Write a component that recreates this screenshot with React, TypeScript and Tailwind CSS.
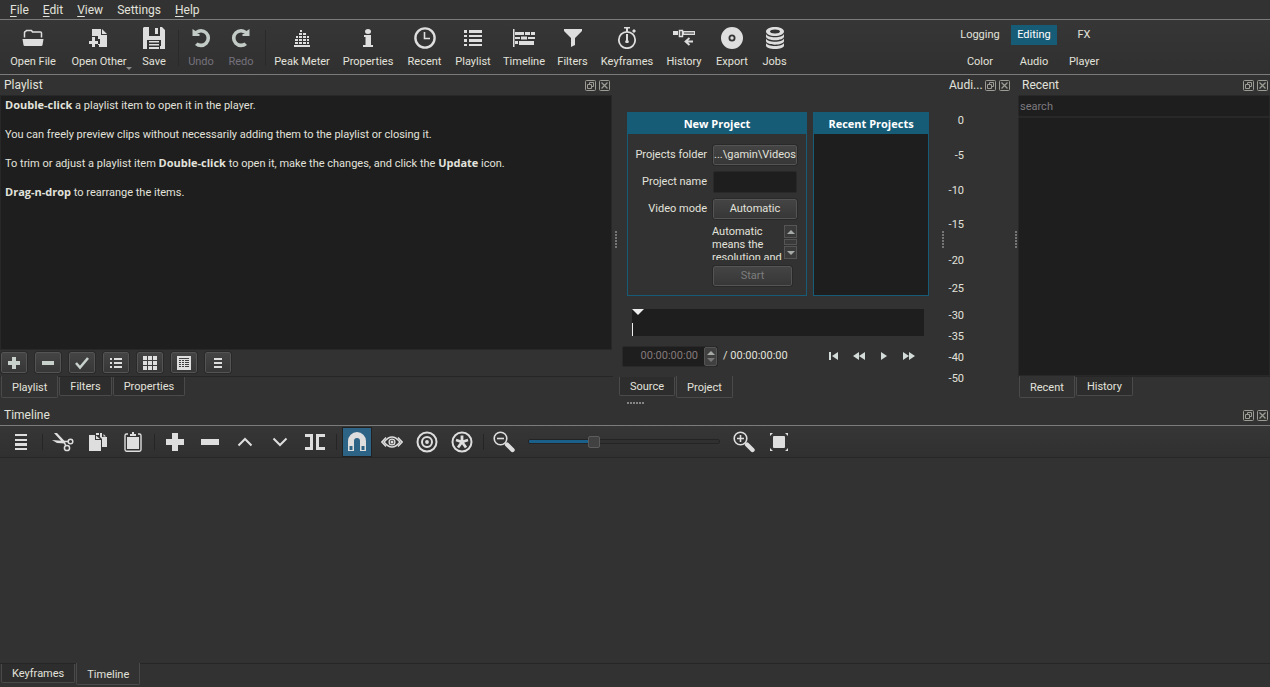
import React, { useState } from 'react';
import clsx from 'clsx';

/* ---------- main toolbar icons ---------- */

const Svg: React.FC<{ size?: number; className?: string; children: React.ReactNode }> = ({
  size = 22,
  className,
  children,
}) => (
  <svg
    width={size}
    height={size}
    viewBox={`0 0 ${size} ${size}`}
    fill="currentColor"
    className={clsx('shrink-0', className || 'text-[#dedede]')}
    aria-hidden="true"
  >
    {children}
  </svg>
);

const OpenFileIcon = () => (
  <Svg>
    <path d="M2.500 10.500V5.500q0-1 1-1l1-1h5l1 1.500h8q1 0 1 1v4.500" fill="none" stroke="currentColor" strokeWidth="1.500" />
    <path d="M.5 12h21l-1 6q-.2 1-1.200 1H2.700q-1 0-1.200-1z" />
  </Svg>
);

const OpenOtherIcon = () => (
  <Svg>
    <path d="M4 2h9v6h6v12h-8v-2h-1v-1h2v-5h-2V9H4zM14 2l5 5h-5z" />
    <path d="M4 10h3v4h3v3H7v3H4v-3H1v-3h3z" />
  </Svg>
);

const SaveIcon = () => (
  <Svg>
    <path d="M1 0h3v9h13V0h2l3 3v19h-4v-9H4v9H0V1z" />
    <path d="M12 1h3v6h-3zM6 14h10v1.500H6zM6 17h10v1.500H6zM6 20h10v2H6zM17 19h2v3h-2z" />
    <path d="M4 0h2v9H4z" />
  </Svg>
);

const UndoIcon = () => (
  <Svg className="text-[#c3cbc7]">
    <path d="M2.500 2v7h7V7H7q2-1.500 4-1.500a5.500 5.500 0 0 1 0 11q-2 0-3.500-1L5 18q2.500 2.200 6 2.200A9 9 0 0 0 11 2Q8 2 5.500 4z" />
  </Svg>
);

const RedoIcon = () => (
  <Svg className="text-[#c3cbc7]">
    <path d="M19.500 2v7h-7V7H15q-2-1.500-4-1.500a5.500 5.500 0 0 0 0 11q2 0 3.500-1L17 18q-2.500 2.200-6 2.200A9 9 0 0 1 11 2q3 0 5.500 2z" />
  </Svg>
);

const PeakMeterIcon = () => (
  <Svg>
    <path d="M3 18h16v2H3zM4 15h3v2H4zM8 15h3v2H8zM12 15h3v2h-3zM16 15h2v2h-2zM4 12h3v2H4zM8 12h3v2H8zM12 12h3v2h-3zM16 12h2v2h-2zM5 9h2v2H5zM8 9h3v2H8zM12 9h3v2h-3zM16 9h2v2h-2zM8 6h3v2H8zM12 6h3v2h-3zM9 3h2v2H9z" />
  </Svg>
);

const PropertiesIcon = () => (
  <Svg>
    <ellipse cx="11" cy="4.500" rx="3" ry="2.500" />
    <path d="M7 8h7v10h2v2H6v-2h2.500v-8H7z" />
  </Svg>
);

const RecentIcon = () => (
  <Svg>
    <circle cx="11" cy="11" r="9.600" fill="none" stroke="currentColor" strokeWidth="2.400" />
    <path d="M10.500 5v6.500H16" fill="none" stroke="currentColor" strokeWidth="1.600" />
  </Svg>
);

const ListIcon = () => (
  <Svg>
    <path d="M2 3h3v3H2zM7 3h13v3H7zM2 8h3v2H2zM7 8h13v2H7zM2 12h3v3H2zM7 12h13v3H7zM2 17h3v2H2zM7 17h13v2H7z" />
  </Svg>
);

const TimelineIcon = () => (
  <Svg>
    <path d="M0 2h1.500v18H0zM2 5h9v3H2zM12 5h5v3h-5zM18 5h4v3h-4zM2 10h5v2H2zM8 9.500h6v3H8zM15 10h7v2h-7zM2 14h3v3H2zM6 14h15v4H6z" />
  </Svg>
);

const FiltersIcon = () => (
  <Svg>
    <path d="M2 2h18v2l-7 7v7l-4 2v-9L2 4z" />
  </Svg>
);

const KeyframesIcon = () => (
  <Svg>
    <circle cx="11" cy="13" r="8.200" fill="none" stroke="currentColor" strokeWidth="1.800" />
    <path d="M8 0h6v1.500h-2V5h-2V1.500H8zM10 7h2v6l1 2-1 1h-2l-1-1 1-2zM16 4l2-2 2 2-2 2z" />
  </Svg>
);

const HistoryIcon = () => (
  <Svg>
    <path d="M0 4h5v4H0zM10 4h12v4H10z" />
    <path d="M6.500 3.500h3v6h-3z" fill="none" stroke="currentColor" strokeWidth="1.500" />
    <path d="M11 6h10" stroke="#333" strokeWidth="1" />
    <path d="M20 14.500h-7M16.500 11l-4 3.500 4 3.500" fill="none" stroke="currentColor" strokeWidth="1.800" />
  </Svg>
);

const ExportIcon = () => (
  <Svg>
    <path fillRule="evenodd" d="M11 0a11 11 0 1 0 0 22 11 11 0 0 0 0-22zm0 7.500a3.500 3.500 0 1 1 0 7 3.500 3.500 0 0 1 0-7z" />
    <circle cx="11" cy="11" r="1.700" />
  </Svg>
);

const JobsIcon = () => (
  <Svg>
    <path fillRule="evenodd" d="M11 0c5 0 9 2 9 4.500S16 9 11 9 2 7 2 4.500 6 0 11 0zm0 2.500c-3 0-5 .8-5 2s2 2 5 2 5-.8 5-2-2-2-5-2z" />
    <path d="M2 7c1 2.200 4.500 3.300 9 3.300S19 9.200 20 7v2.500c0 2-4 3.800-9 3.800S2 11.500 2 9.500z" />
    <path d="M2 11.500c1 2.200 4.500 3.300 9 3.300s8-1.100 9-3.300V14c0 2-4 3.700-9 3.700S2 16 2 14z" />
    <path d="M2 16c1 2 4.500 3 9 3s8-1 9-3v2.500c0 2-4 3.500-9 3.500s-9-1.500-9-3.500z" />
  </Svg>
);

/* ---------- playlist icons ---------- */

const PlusIcon = () => (
  <Svg size={16} className="text-[#c8d1cc]">
    <path d="M6 2h4v4h4v4h-4v4H6v-4H2V6h4z" />
  </Svg>
);

const MinusIcon = () => (
  <Svg size={16} className="text-[#c8d1cc]">
    <path d="M2 6h12v4H2z" />
  </Svg>
);

const CheckIcon = () => (
  <Svg size={16} className="text-[#c8d1cc]">
    <path d="M2 8l4 4.500L14 3" fill="none" stroke="currentColor" strokeWidth="2.600" />
  </Svg>
);

const DetailIcon = () => (
  <Svg size={16}>
    <path d="M2 3h2v2H2zM6 3h8v2H6zM2 7h2v2H2zM6 7h8v2H6zM2 11h2v2H2zM6 11h8v2H6z" />
  </Svg>
);

const GridIcon = () => (
  <Svg size={16}>
    <path d="M1 1h4v4H1zM6 1h4v4H6zM11 1h4v4h-4zM1 6h4v4H1zM6 6h4v4H6zM11 6h4v4h-4zM1 11h4v4H1zM6 11h4v4H6zM11 11h4v4h-4z" />
  </Svg>
);

const SheetIcon = () => (
  <Svg size={16}>
    <path fillRule="evenodd" d="M1 1h14v14H1zM3 3v1h10V3zM3 5v1h2V5zM6 5v1h2V5zM9 5v1h4V5zM3 7v1h2V7zM6 7v1h2V7zM9 7v1h4V7zM3 9v1h2V9zM6 9v1h2V9zM9 9v1h4V9zM3 11v1h2v-1zM6 11v1h2v-1zM9 11v1h4v-1z" />
  </Svg>
);

const MenuSmallIcon = () => (
  <Svg size={16}>
    <path d="M4 3h8v2H4zM4 7h8v2H4zM4 11h8v2H4z" />
  </Svg>
);

/* ---------- timeline icons ---------- */

const BarsIcon = () => (
  <Svg>
    <path d="M5 3h12v2H5zM5 8h12v2H5zM5 12h12v3H5zM5 17h12v2H5z" />
  </Svg>
);

const CutIcon = () => (
  <Svg>
    <path d="M2 2h3l8.500 9-2 1.500zM0 9l13 1v2.500L5 12z" />
    <circle cx="18.500" cy="10.500" r="2.300" fill="none" stroke="currentColor" strokeWidth="1.500" />
    <circle cx="15" cy="17" r="2.600" fill="none" stroke="currentColor" strokeWidth="1.500" />
    <path d="M12 10.500h4M12 11l2 4" stroke="currentColor" strokeWidth="1.600" />
  </Svg>
);

const CopyIcon = () => (
  <Svg>
    <path d="M2 4h6v5h6v11H2zM9 2h3v2H9zM9 4.500L13 8H9z" />
    <path d="M13 2h2v4h5v10h-5V8l-2-2zM16.500 3l2.500 2.500h-2.500z" />
  </Svg>
);

const PasteIcon = () => (
  <Svg>
    <path d="M6 3H4.500Q3 3 3 4.500v14Q3 20.200 4.500 20.200h13q1.500 0 1.500-1.700v-14Q19 3 17.500 3H16" fill="none" stroke="currentColor" strokeWidth="1.400" />
    <path d="M8 3h2V1h2v2h2v2H8zM5 6h12v12H5z" />
  </Svg>
);

const AppendIcon = () => (
  <Svg>
    <path d="M8 2h6v6h6v6h-6v6H8v-6H2V8h6z" />
  </Svg>
);

const RemoveIcon = () => (
  <Svg>
    <path d="M2 8h18v6H2z" />
  </Svg>
);

const LiftIcon = () => (
  <Svg>
    <path d="M4.500 14.500L11 8l6.500 6.500" fill="none" stroke="currentColor" strokeWidth="2" />
  </Svg>
);

const OverwriteIcon = () => (
  <Svg>
    <path d="M4.500 7.500L11 14l6.500-6.500" fill="none" stroke="currentColor" strokeWidth="2" />
  </Svg>
);

const SplitIcon = () => (
  <Svg>
    <path d="M1 3h8v16H1v-3h5V6H1zM21 3h-9v16h9v-3h-6V6h6z" />
  </Svg>
);

const MagnetIcon = () => (
  <Svg>
    <path fillRule="evenodd" d="M2 20V10a9 9 0 0 1 18 0v10h-6V10a3 3 0 0 0-6 0v10zM3.500 15v4h3v-4zM15.500 15v4h3v-4z" />
  </Svg>
);

const ScrubIcon = () => (
  <Svg>
    <path d="M5 6.500L.8 11 5 15.500M17 6.500l4.200 4.500-4.200 4.500" fill="none" stroke="currentColor" strokeWidth="1.400" />
    <path d="M3 11Q7 6 11 6t8 5Q15 16 11 16t-8-5z" fill="none" stroke="currentColor" strokeWidth="1.600" />
    <circle cx="11" cy="11" r="2.900" fill="none" stroke="currentColor" strokeWidth="1.300" />
    <circle cx="11" cy="11" r="1.500" />
  </Svg>
);

const RippleIcon = () => (
  <Svg>
    <circle cx="11" cy="11" r="9.500" fill="none" stroke="currentColor" strokeWidth="2" />
    <circle cx="11" cy="11" r="5" fill="none" stroke="currentColor" strokeWidth="2" />
    <circle cx="11" cy="11" r="1.900" />
  </Svg>
);

const RippleAllIcon = () => (
  <Svg>
    <circle cx="11" cy="11" r="9.500" fill="none" stroke="currentColor" strokeWidth="2" />
    <path d="M11 11V4.500M11 11l6-2M11 11l4 5.500M11 11l-4 5.500M11 11L5 9" stroke="currentColor" strokeWidth="2.800" />
  </Svg>
);

const ZoomIcon: React.FC<{ plus?: boolean }> = ({ plus }) => (
  <Svg>
    <circle cx="7.500" cy="7.500" r="6.300" fill="none" stroke="currentColor" strokeWidth="1.600" />
    <path d={plus ? 'M4 7.500h7M7.500 4v7' : 'M4 7.500h7'} stroke="currentColor" strokeWidth="1.600" />
    <path d="M14 13.500l5.500 5.500" stroke="currentColor" strokeWidth="4.400" strokeLinecap="round" />
  </Svg>
);

const FitIcon = () => (
  <Svg>
    <rect x="5" y="5" width="12" height="12" rx="1" />
    <path d="M2 2h3L2 5zM17 2h3v3zM2 17l3 3H2zM20 17v3h-3z" />
  </Svg>
);

/* ---------- small parts ---------- */

const FloatIcon = () => (
  <svg width="11" height="11" viewBox="0 0 11 11" fill="none" stroke="#9c9c94" aria-hidden="true">
    <rect x=".5" y=".5" width="10" height="10" rx="1" />
    <path d="M2.500 4.500h4v4h-4zM4.500 4.500v-2h4v4h-2" />
  </svg>
);

const CloseIcon = () => (
  <svg width="11" height="11" viewBox="0 0 11 11" fill="none" stroke="#9c9c94" aria-hidden="true">
    <rect x=".5" y=".5" width="10" height="10" rx="1" />
    <path d="M2.500 2.500l6 6M8.500 2.500l-6 6" strokeWidth="1.300" />
  </svg>
);

const DockTitle: React.FC<{ title: string; shown?: string; className?: string }> = ({ title, shown, className }) => (
  <div className={clsx('flex h-5 shrink-0 items-center gap-[3px] pl-1', className || 'pr-[2px]')}>
    <h2 title={title} className="min-w-0 flex-1 text-[12px] whitespace-nowrap">{shown || title}</h2>
    <button aria-label={`Float ${title}`}>
      <FloatIcon />
    </button>
    <button aria-label={`Close ${title}`}>
      <CloseIcon />
    </button>
  </div>
);

const Tabs: React.FC<{ names: string[]; initial: string; line?: boolean }> = ({ names, initial, line = true }) => {
  const [active, setActive] = useState(initial);
  return (
    <div
      role="tablist"
      className={clsx('flex h-[22px] shrink-0 items-start gap-px border-t pl-px', line ? 'border-[#262626]' : 'border-transparent')}
    >
      {names.map((name) => (
        <button
          key={name}
          role="tab"
          aria-selected={active === name}
          onClick={() => setActive(name)}
          className={clsx(
            'rounded-b-[2px] border border-t-0 border-[#4a4a4a] px-[10px] whitespace-nowrap',
            active === name ? '-mt-px h-[22px] bg-[#323232] pt-[2px]' : 'h-[19px] bg-[#2d2d2d] pt-px'
          )}
        >
          {name}
        </button>
      ))}
    </div>
  );
};

const VerticalGrip = () => (
  <div className="flex w-[5px] shrink-0 flex-col items-center justify-center gap-px pt-[6px]">
    {[0, 1, 2, 3, 4, 5].map((dot) => (
      <span key={dot} className="size-[2px] bg-[#757575]" />
    ))}
  </div>
);

const Separator = () => <span className="-mr-px h-4 w-px shrink-0 bg-[#252525]" />;

/* ---------- data ---------- */

type Tool = {
  label: string;
  Icon: React.FC;
  width: string;
  arrow?: boolean;
  disabled?: boolean;
};

const menus = ['File', 'Edit', 'View', 'Settings', 'Help'];

const fileTools: Tool[] = [
  { label: 'Open File', Icon: OpenFileIcon, width: 'w-[60px]' },
  { label: 'Open Other', Icon: OpenOtherIcon, width: 'w-[72px]', arrow: true },
  { label: 'Save', Icon: SaveIcon, width: 'w-[38px]' },
];

const editTools: Tool[] = [
  { label: 'Undo', Icon: UndoIcon, width: 'w-[40px]', disabled: true },
  { label: 'Redo', Icon: RedoIcon, width: 'w-[40px]', disabled: true },
];

const viewTools: Tool[] = [
  { label: 'Peak Meter', Icon: PeakMeterIcon, width: 'w-[68px]' },
  { label: 'Properties', Icon: PropertiesIcon, width: 'w-[64px]' },
  { label: 'Recent', Icon: RecentIcon, width: 'w-[49px]' },
  { label: 'Playlist', Icon: ListIcon, width: 'w-[48px]' },
  { label: 'Timeline', Icon: TimelineIcon, width: 'w-[54px]' },
  { label: 'Filters', Icon: FiltersIcon, width: 'w-[43px]' },
  { label: 'Keyframes', Icon: KeyframesIcon, width: 'w-[66px]' },
  { label: 'History', Icon: HistoryIcon, width: 'w-[48px]' },
  { label: 'Export', Icon: ExportIcon, width: 'w-[48px]' },
  { label: 'Jobs', Icon: JobsIcon, width: 'w-[37px]' },
];

const layouts = ['Logging', 'Editing', 'FX', 'Color', 'Audio', 'Player'];

const playlistActions = [
  { label: 'Add', Icon: PlusIcon },
  { label: 'Remove', Icon: MinusIcon },
  { label: 'Update', Icon: CheckIcon },
  { label: 'View as details', Icon: DetailIcon },
  { label: 'View as icons', Icon: GridIcon },
  { label: 'View as tiles', Icon: SheetIcon },
  { label: 'Playlist menu', Icon: MenuSmallIcon },
];

// space is the weight of the gap that follows the mark
const audioMarks = [
  { db: 0, space: 22 },
  { db: -5, space: 22 },
  { db: -10, space: 21 },
  { db: -15, space: 22 },
  { db: -20, space: 15 },
  { db: -25, space: 14 },
  { db: -30, space: 8 },
  { db: -35, space: 8 },
  { db: -40, space: 8 },
  { db: -50, space: 0 },
];

const transport = [
  { label: 'Skip to start', d: 'M2 3h2v8H2zM11 3v8L5 7z' },
  { label: 'Rewind', d: 'M7 3v8L1 7zM13 3v8L7 7z' },
  { label: 'Play', d: 'M4 3v8l6-4z' },
  { label: 'Fast forward', d: 'M1 3v8l6-4zM7 3v8l6-4z' },
];

const pushButton =
  'rounded-[2px] border border-[#545454] bg-linear-to-b from-[#444] to-[#373737] outline outline-[#292929]';

const ToolButton: React.FC<{ tool: Tool }> = ({ tool }) => (
  <button
    disabled={tool.disabled}
    className={clsx('relative flex shrink-0 flex-col items-center gap-[5px] whitespace-nowrap', tool.width, tool.disabled && 'text-[#75717c]')}
  >
    <tool.Icon />
    <span className="leading-4">{tool.label}</span>
    {tool.arrow && (
      <span className="absolute right-[3px] bottom-0 border-x-[3px] border-t-[3px] border-x-transparent border-t-[#8a8a8a]" />
    )}
  </button>
);

const MenuLabel: React.FC<{ text: string }> = ({ text }) =>
  text === 'Settings' ? (
    <>{text}</>
  ) : (
    <>
      <span className="underline underline-offset-2">{text[0]}</span>
      {text.slice(1)}
    </>
  );

const MainToolbar = () => {
  const [layout, setLayout] = useState('Editing');
  return (
    <div className="flex h-[55px] shrink-0 items-center border-b border-[#7b7b7b] bg-linear-to-b from-[#363636] to-[#303030] pt-[2px] pl-[3px]">
      <div className="flex">
        {fileTools.map((tool) => (
          <ToolButton key={tool.label} tool={tool} />
        ))}
      </div>
      <span className="mr-[2px] ml-[5px] h-9 w-px bg-[#2a2a2a]" />
      <div className="flex">
        {editTools.map((tool) => (
          <ToolButton key={tool.label} tool={tool} />
        ))}
      </div>
      <span className="mr-[2px] ml-1 h-9 w-px bg-[#2a2a2a]" />
      <div className="flex">
        {viewTools.map((tool) => (
          <ToolButton key={tool.label} tool={tool} />
        ))}
      </div>
      <div className="mr-[163px] ml-auto grid grid-cols-[54px_54px_46px] gap-y-[7px]">
        {layouts.map((name) => (
          <button
            key={name}
            onClick={() => setLayout(name)}
            className={clsx('h-5 justify-self-center px-[6px]', layout === name && 'bg-[#175c77] text-white')}
          >
            {name}
          </button>
        ))}
      </div>
    </div>
  );
};

const Strong: React.FC<{ children: React.ReactNode }> = ({ children }) => (
  <b className="font-['Open_Sans',sans-serif] leading-3 font-bold">{children}</b>
);

const PlaylistDock = () => (
  <section className="flex min-w-0 flex-1 flex-col">
    <DockTitle title="Playlist" className="pr-[3px]" />
    <div className="mr-px flex-1 space-y-[13px] border border-[#282828] bg-[#1e1e1e] px-1 py-[2px] leading-4">
      <p>
        <Strong>Double-click</Strong> a playlist item to open it in the player.
      </p>
      <p>You can freely preview clips without necessarily adding them to the playlist or closing it.</p>
      <p>
        To trim or adjust a playlist item <Strong>Double-click</Strong> to open it, make the changes, and click the{' '}
        <Strong>Update</Strong> icon.
      </p>
      <p>
        <Strong>Drag-n-drop</Strong> to rearrange the items.
      </p>
    </div>
    <div className="flex gap-[8px] px-px pt-[2px] pb-[3px]">
      {playlistActions.map(({ label, Icon }) => (
        <button key={label} aria-label={label} className={clsx('flex h-[21px] w-[26px] items-center justify-center', pushButton)}>
          <Icon />
        </button>
      ))}
    </div>
    <Tabs names={['Playlist', 'Filters', 'Properties']} initial="Playlist" />
  </section>
);

const BoxTitle: React.FC<{ children: React.ReactNode }> = ({ children }) => (
  <h3 className="bg-[#175c77] pt-px text-center font-['Open_Sans',sans-serif] text-[11px] leading-5 font-bold whitespace-nowrap text-white">
    {children}
  </h3>
);

const NewProject = () => (
  <form className="flex w-[180px] shrink-0 flex-col border border-[#175c77]">
    <BoxTitle>New Project</BoxTitle>
    <div className="grid grid-cols-[79px_84px] items-center gap-x-[6px] gap-y-[6px] pt-[11px]">
      <label htmlFor="folder" className="text-right">Projects folder</label>
      <button id="folder" type="button" className={clsx('h-5 whitespace-nowrap', pushButton)}>...\gamin\Videos</button>
      <label htmlFor="name" className="text-right">Project name</label>
      <input id="name" type="text" className="h-[22px] w-full rounded-[2px] border border-[#292929] bg-[#1e1e1e] px-1 outline-none" />
      <label htmlFor="mode" className="text-right">Video mode</label>
      <button id="mode" type="button" className={clsx('h-5', pushButton)}>Automatic</button>
      <div className="col-start-2 flex h-[35px]">
        <p className="-ml-px flex-1 overflow-hidden leading-[13px]">Automatic means the resolution and</p>
        <div className="flex w-[13px] flex-col gap-px">
          <button type="button" aria-label="Scroll up" className="flex h-[13px] items-center justify-center border border-[#555] bg-[#3a3a3a]">
            <span className="border-x-[4px] border-b-[4px] border-x-transparent border-b-[#a5aaa7]" />
          </button>
          <span className="h-[6px] border border-[#555] bg-[#3a3a3a]" />
          <button type="button" aria-label="Scroll down" className="flex h-[13px] items-center justify-center border border-[#555] bg-[#3a3a3a]">
            <span className="border-x-[4px] border-t-[4px] border-x-transparent border-t-[#a5aaa7]" />
          </button>
        </div>
      </div>
      <button type="button" disabled className={clsx('col-start-2 h-5 w-[79px] text-[#7d7d7d]', pushButton)}>Start</button>
    </div>
  </form>
);

const PlayerDock = () => (
  <section className="flex w-[322px] shrink-0 flex-col">
    <div className="flex flex-1 gap-[6px] pt-[37px] pr-[11px] pb-[13px] pl-[9px]">
      <NewProject />
      <div className="flex flex-1 flex-col border border-[#175c77] bg-[#1e1e1e]">
        <BoxTitle>Recent Projects</BoxTitle>
      </div>
    </div>
    <div className="mr-4 ml-[14px] flex h-[27px] flex-col items-start justify-between bg-[#1e1e1e]">
      <span className="border-x-[6px] border-t-[6px] border-x-transparent border-t-[#eee]" />
      <span className="h-[13px] w-px bg-[#eee]" />
    </div>
    <div className="flex h-10 items-center pl-1">
      <div className="flex h-[21px] w-[96px] rounded-[2px] border border-[#292929] bg-[#1e1e1e]">
        <input aria-label="Position" defaultValue="00:00:00:00" className="w-0 flex-1 bg-transparent pr-[6px] text-right text-[#85797b] outline-none" />
        <button aria-label="Step position" className="flex w-[13px] flex-col items-center justify-center gap-[3px] rounded-[2px] border border-[#545454] bg-[#404040]">
          <span className="border-x-[4px] border-b-[4px] border-x-transparent border-b-[#a5aaa7]" />
          <span className="border-x-[4px] border-t-[4px] border-x-transparent border-t-[#777]" />
        </button>
      </div>
      <span className="ml-[5px]">/ 00:00:00:00</span>
      <div className="mr-6 ml-auto flex gap-[11px] text-[#d3dcd8]">
        {transport.map(({ label, d }) => (
          <button key={label} aria-label={label}>
            <svg width="14" height="14" viewBox="0 0 14 14" fill="currentColor"><path d={d} /></svg>
          </button>
        ))}
      </div>
    </div>
    <Tabs names={['Source', 'Project']} initial="Project" line={false} />
  </section>
);

const AudioDock = () => (
  <section className="flex w-[68px] shrink-0 flex-col">
    <DockTitle title="Audio Peak Meter" shown="Audi..." className="pr-[3px]" />
    <ol className="flex w-[19px] flex-1 flex-col pt-[19px] pb-[13px] text-right leading-[13px]">
      {audioMarks.map(({ db, space }) => (
        <li key={db} style={{ flexGrow: space }}>{db}</li>
      ))}
    </ol>
  </section>
);

const RecentDock = () => (
  <section className="flex w-[252px] shrink-0 flex-col">
    <DockTitle title="Recent" />
    <input
      type="search"
      aria-label="search"
      placeholder="search"
      className="h-[22px] rounded-[2px] border border-[#282828] bg-[#1e1e1e] px-px outline-none placeholder:text-[#7d7a80]"
    />
    <div className="flex-1 border border-[#282828] bg-[#1e1e1e]" />
    <Tabs names={['Recent', 'History']} initial="Recent" />
  </section>
);

const TimelineButton: React.FC<{ label: string; pressed?: boolean; children: React.ReactNode }> = ({ label, pressed, children }) => (
  <button
    aria-label={label}
    aria-pressed={pressed}
    className={clsx('flex h-[28px] w-[28px] shrink-0 items-center justify-center', pressed && 'bg-[#2d6384] outline outline-[#222]')}
  >
    {children}
  </button>
);

const TimelineDock = () => {
  const [zoom, setZoom] = useState(33);
  return (
    <section className="-mt-[3px] flex flex-[282_1_0px] flex-col">
      <DockTitle title="Timeline" />
      <div className="flex h-[33px] shrink-0 items-center gap-[7px] border-t border-b border-t-[#7b7b7b] border-b-[#272727] bg-linear-to-b from-[#363636] to-[#303030] pl-[7px]">
        <TimelineButton label="Timeline menu"><BarsIcon /></TimelineButton>
        <Separator />
        <TimelineButton label="Cut"><CutIcon /></TimelineButton>
        <TimelineButton label="Copy"><CopyIcon /></TimelineButton>
        <TimelineButton label="Paste"><PasteIcon /></TimelineButton>
        <Separator />
        <TimelineButton label="Append"><AppendIcon /></TimelineButton>
        <TimelineButton label="Ripple delete"><RemoveIcon /></TimelineButton>
        <TimelineButton label="Lift"><LiftIcon /></TimelineButton>
        <TimelineButton label="Overwrite"><OverwriteIcon /></TimelineButton>
        <TimelineButton label="Split"><SplitIcon /></TimelineButton>
        <Separator />
        <TimelineButton label="Snap" pressed><MagnetIcon /></TimelineButton>
        <TimelineButton label="Scrub while dragging"><ScrubIcon /></TimelineButton>
        <TimelineButton label="Ripple"><RippleIcon /></TimelineButton>
        <TimelineButton label="Ripple all tracks"><RippleAllIcon /></TimelineButton>
        <Separator />
        <TimelineButton label="Zoom out"><ZoomIcon /></TimelineButton>
        <input
          type="range"
          aria-label="Zoom"
          value={zoom}
          onChange={(e) => setZoom(Number(e.target.value))}
          style={{ backgroundImage: `linear-gradient(to right, #1b608a ${zoom}%, #303030 ${zoom}%)` }}
          className="mx-[3px] h-[5px] w-48 appearance-none rounded-[2px] border border-[#242424] [&::-webkit-slider-thumb]:size-3 [&::-webkit-slider-thumb]:appearance-none [&::-webkit-slider-thumb]:rounded-[2px] [&::-webkit-slider-thumb]:border [&::-webkit-slider-thumb]:border-[#5c5c5c] [&::-webkit-slider-thumb]:bg-[#414141]"
        />
        <TimelineButton label="Zoom in"><ZoomIcon plus /></TimelineButton>
        <TimelineButton label="Zoom to fit"><FitIcon /></TimelineButton>
      </div>
      <div className="flex-1" />
      <Tabs names={['Keyframes', 'Timeline']} initial="Timeline" />
      <div className="h-[2px]" />
    </section>
  );
};

const App: React.FC = () => (
  <div className="flex min-h-screen flex-col bg-[#323232] font-[Roboto,'Noto_Sans',sans-serif] text-[11px] leading-4 text-[#e2e2dc]">
    <nav className="flex h-5 shrink-0 items-center gap-[14px] border-b border-[#7b7b7b] pl-[10px] text-[12px]">
      {menus.map((menu) => (
        <button key={menu}>
          <MenuLabel text={menu} />
        </button>
      ))}
    </nav>
    <MainToolbar />
    <div className="flex flex-[333_1_0px] flex-col">
      <div className="flex flex-1">
        <PlaylistDock />
        <VerticalGrip />
        <PlayerDock />
        <VerticalGrip />
        <AudioDock />
        <VerticalGrip />
        <RecentDock />
      </div>
      <div className="flex h-[10px] items-center justify-center gap-px">
        {[0, 1, 2, 3, 4, 5].map((dot) => (
          <span key={dot} className="size-[2px] bg-[#858585]" />
        ))}
      </div>
    </div>
    <TimelineDock />
  </div>
);

export default App;
